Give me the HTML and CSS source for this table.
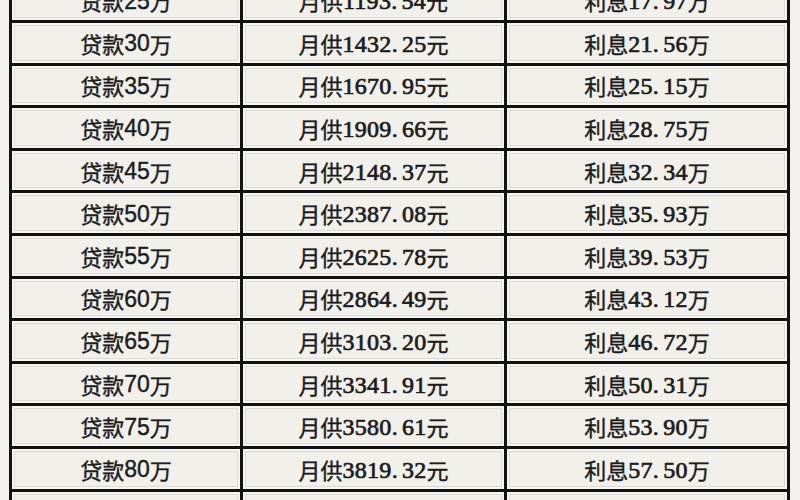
FILE: index.html
```html
<!DOCTYPE html>
<html lang="zh-CN">
<head>
<meta charset="utf-8">
<title>贷款月供利息表</title>
<link rel="stylesheet" href="styles.css">
</head>
<body>
<div class="sheet">
  <div class="cell">贷款<span class="a">25</span>万</div>
  <div class="cell">月供<span class="s">1193<span class="pt">.</span>54</span>元</div>
  <div class="cell">利息<span class="s">17<span class="pt">.</span>97</span>万</div>

  <div class="cell">贷款<span class="a">30</span>万</div>
  <div class="cell">月供<span class="s">1432<span class="pt">.</span>25</span>元</div>
  <div class="cell">利息<span class="s">21<span class="pt">.</span>56</span>万</div>

  <div class="cell">贷款<span class="a">35</span>万</div>
  <div class="cell">月供<span class="s">1670<span class="pt">.</span>95</span>元</div>
  <div class="cell">利息<span class="s">25<span class="pt">.</span>15</span>万</div>

  <div class="cell">贷款<span class="a">40</span>万</div>
  <div class="cell">月供<span class="s">1909<span class="pt">.</span>66</span>元</div>
  <div class="cell">利息<span class="s">28<span class="pt">.</span>75</span>万</div>

  <div class="cell">贷款<span class="a">45</span>万</div>
  <div class="cell">月供<span class="s">2148<span class="pt">.</span>37</span>元</div>
  <div class="cell">利息<span class="s">32<span class="pt">.</span>34</span>万</div>

  <div class="cell">贷款<span class="a">50</span>万</div>
  <div class="cell">月供<span class="s">2387<span class="pt">.</span>08</span>元</div>
  <div class="cell">利息<span class="s">35<span class="pt">.</span>93</span>万</div>

  <div class="cell">贷款<span class="a">55</span>万</div>
  <div class="cell">月供<span class="s">2625<span class="pt">.</span>78</span>元</div>
  <div class="cell">利息<span class="s">39<span class="pt">.</span>53</span>万</div>

  <div class="cell">贷款<span class="a">60</span>万</div>
  <div class="cell">月供<span class="s">2864<span class="pt">.</span>49</span>元</div>
  <div class="cell">利息<span class="s">43<span class="pt">.</span>12</span>万</div>

  <div class="cell">贷款<span class="a">65</span>万</div>
  <div class="cell">月供<span class="s">3103<span class="pt">.</span>20</span>元</div>
  <div class="cell">利息<span class="s">46<span class="pt">.</span>72</span>万</div>

  <div class="cell">贷款<span class="a">70</span>万</div>
  <div class="cell">月供<span class="s">3341<span class="pt">.</span>91</span>元</div>
  <div class="cell">利息<span class="s">50<span class="pt">.</span>31</span>万</div>

  <div class="cell">贷款<span class="a">75</span>万</div>
  <div class="cell">月供<span class="s">3580<span class="pt">.</span>61</span>元</div>
  <div class="cell">利息<span class="s">53<span class="pt">.</span>90</span>万</div>

  <div class="cell">贷款<span class="a">80</span>万</div>
  <div class="cell">月供<span class="s">3819<span class="pt">.</span>32</span>元</div>
  <div class="cell">利息<span class="s">57<span class="pt">.</span>50</span>万</div>

  <div class="cell"></div>
  <div class="cell"></div>
  <div class="cell"></div>
</div>
</body>
</html>
```

FILE: styles.css
```css
html, body {
  margin: 0;
  padding: 0;
  width: 800px;
  height: 500px;
  overflow: hidden;
  background: #f3f2ee;
}

.sheet {
  display: grid;
  grid-template-columns: 231px 264px 283px;
  grid-auto-rows: 42.6px;
  margin: -19.6px 0 0 9px;
  width: 781px;
  box-sizing: border-box;
  border-left: 3px solid #121212;
}

.cell {
  box-sizing: border-box;
  border-right: 3px solid #121212;
  border-bottom: 3px solid #121212;
  background: #f1f0eb;
  box-shadow: inset 0 0 0 2px #f6f5f2, inset 0 0 0 3px #dcdbd6;
  display: flex;
  align-items: center;
  justify-content: center;
  font-family: "Noto Sans CJK SC", sans-serif;
  font-size: 22px;
  color: #1c1c1c;
  -webkit-text-stroke: 0.4px #1c1c1c;
  line-height: 1;
  white-space: nowrap;
}

.a {
  font-family: "Liberation Sans", "Noto Sans CJK SC", sans-serif;
  font-size: 23px;
  position: relative;
  top: 1px;
}

.s {
  font-family: "Liberation Serif", "Noto Sans CJK SC", serif;
  font-size: 24px;
  font-weight: normal;
  -webkit-text-stroke: 0.7px #1c1c1c;
  letter-spacing: 0.3px;
  position: relative;
  top: 1px;
}

.pt {
  margin-right: 4px;
}
```
